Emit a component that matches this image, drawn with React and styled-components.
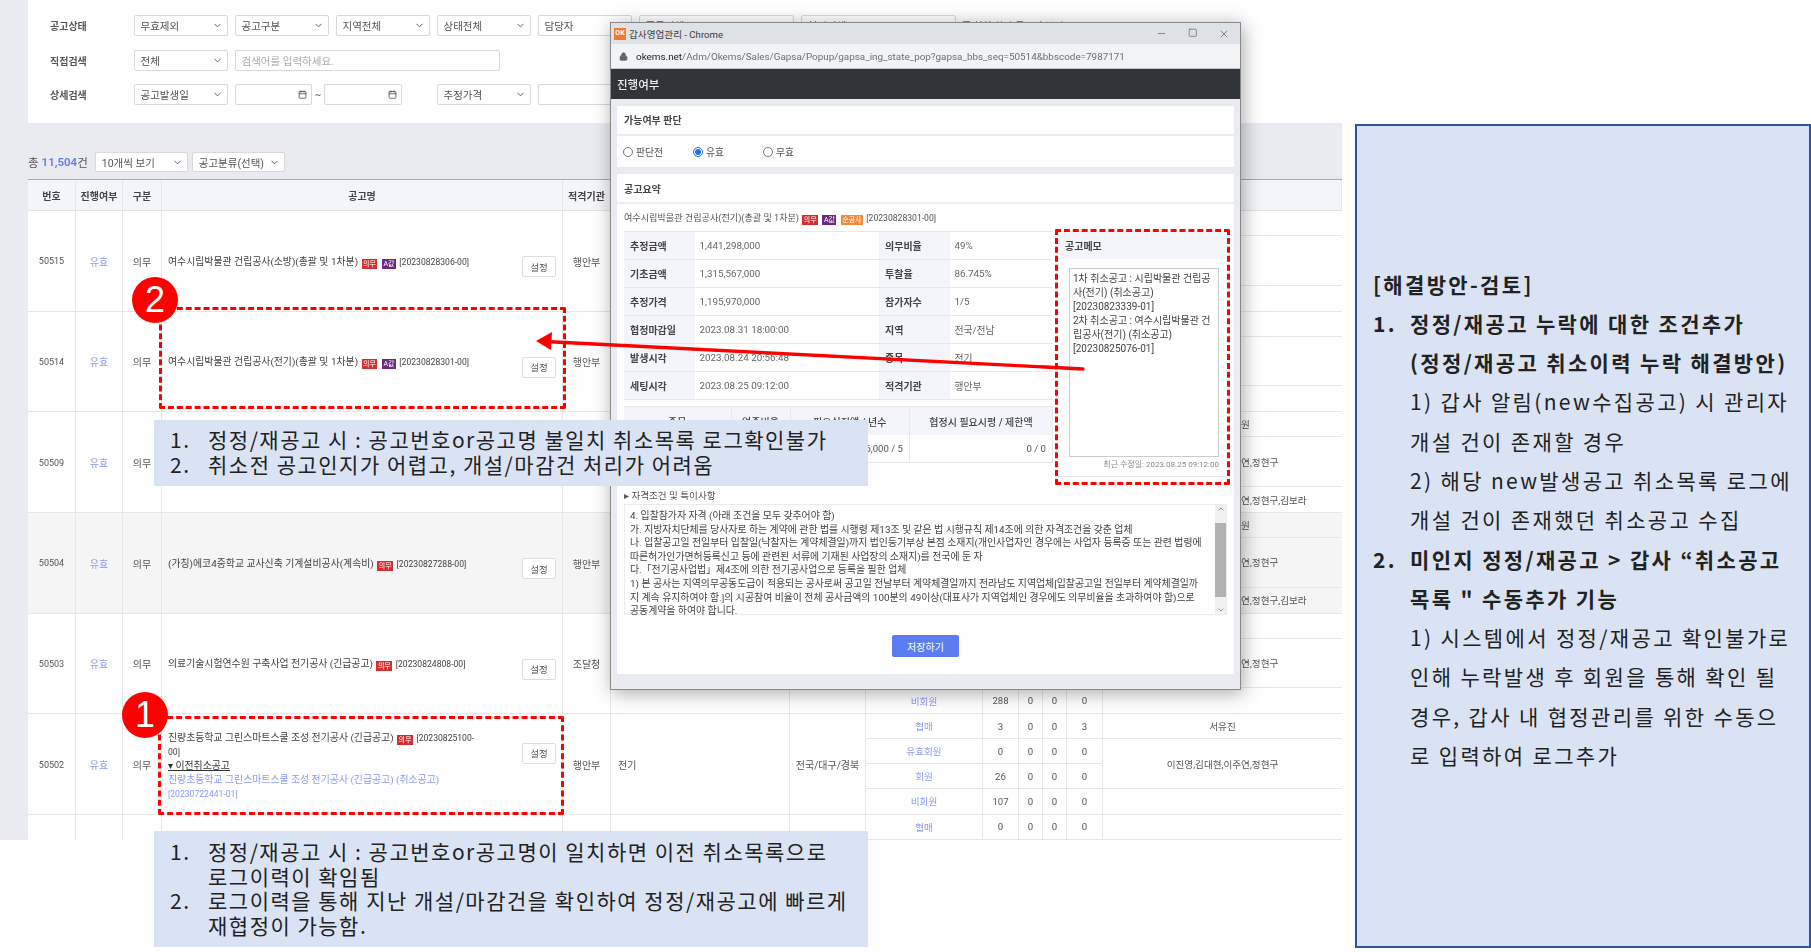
import React from 'react'
import styled, { createGlobalStyle } from 'styled-components'
import { ChevronDown, Lock, Minus, Square, X, Calendar, ChevronUp } from 'lucide-react'

const GlobalStyle = createGlobalStyle`
    html, body {
        margin: 0;
        padding: 0;
        background: #fff;
    }
    * {
        box-sizing: border-box;
    }
`

const FONT = `Roboto, "Noto Sans CJK KR", sans-serif`

const Page = styled.div`
    position: relative;
    display: grid;
    grid-template-columns: 1342px 1fr;
    width: 1811px;
    height: 952px;
    overflow: hidden;
    font-family: ${FONT};
    color: #444;
`

/* ---------- the screenshot behind everything ---------- */
const Base = styled.div`
    height: 840px;
    overflow: hidden;
    padding-left: 28px;
    background: #e9ebf0;
    filter: blur(0.35px);
`

const FilterCard = styled.div`
    display: flex;
    flex-direction: column;
    gap: 13.5px;
    height: 123px;
    padding: 15px 0 0 22px;
    background: #fff;
`

const FilterRow = styled.div`
    display: flex;
    align-items: center;
    gap: 7px;
    height: 21px;
`

const FilterLabel = styled.span`
    width: 76.5px;
    font-size: 10px;
    font-weight: 600;
    color: #555;
`

const SelectBox = styled.div`
    display: flex;
    align-items: center;
    justify-content: space-between;
    flex: none;
    width: ${({ $w }) => $w || 94}px;
    height: ${({ $h }) => $h || 21}px;
    padding: 0 4px 0 6px;
    border: 1px solid #d9d9d9;
    border-radius: 2px;
    background: #fff;
    font-size: 10.5px;
    color: #555;
    white-space: nowrap;
`

const InputBox = styled(SelectBox)`
    color: #aaa;
`

const Tilde = styled.span`
    width: 5px;
    margin: 0 -3.5px;
    font-size: 9px;
`

const Spacer = styled.span`
    width: ${({ $w }) => $w}px;
    flex: none;
`

const CheckMark = styled.span`
    flex: none;
    width: 9px;
    height: 9px;
    margin-left: -1px;
    border: 1px solid #888;
    border-radius: 2px;
`

const CheckLabel = styled.span`
    margin-left: -4px;
    font-size: 10px;
    color: #666;
    white-space: nowrap;
`

const CountRow = styled.div`
    display: flex;
    align-items: center;
    height: 56px;
    padding-top: 22px;
    font-size: 11.5px;
    color: #555;
`

const CountNum = styled.b`
    margin: 0 0 0 3px;
    color: #5f7df0;
    font-weight: 600;
`

const CountSelects = styled.div`
    display: flex;
    gap: 4px;
    margin-left: 7px;
`

const Table = styled.div`
    width: 1314px;
    border-top: 1px solid #aaa;
    background: #fff;
`

const COLS = '48px 47px 39px 401px 48px 179px 76px 1fr'

const HeadRow = styled.div`
    display: grid;
    grid-template-columns: ${COLS};
    height: 31px;
    background: #f3f5fa;
    border-bottom: 1px solid #e4e4e4;
`

const HeadCell = styled.div`
    display: flex;
    align-items: center;
    justify-content: center;
    border-right: 1px solid #e6e6e6;
    font-size: 10px;
    font-weight: 600;
    color: #444;
    white-space: nowrap;
`

const Row = styled.div`
    display: grid;
    grid-template-columns: ${COLS};
    height: 100.67px;
    background: ${({ $shade }) => ($shade ? '#f5f5f5' : '#fff')};
    border-bottom: 1px solid #e6e6e6;
`

const Cell = styled.div`
    display: flex;
    align-items: center;
    justify-content: ${({ $left }) => ($left ? 'flex-start' : 'center')};
    padding-top: 1px;
    padding-left: ${({ $left }) => ($left ? '7px' : '0')};
    border-right: 1px solid #e6e6e6;
    font-size: ${({ $num }) => ($num ? '9px' : '10px')};
    color: ${({ $link }) => ($link ? '#8a9bf5' : '#555')};
    white-space: nowrap;
`

const NameCell = styled(Cell)`
    justify-content: space-between;
    padding: 0 6px 0 6px;
    white-space: normal;
`

const NameText = styled.div`
    width: 312px;
    margin-top: ${({ $multi }) => ($multi ? '4px' : '2px')};
    line-height: 14px;
    font-size: 9.9px;
    color: #444;
`

const Code = styled.span`
    font-size: 8.6px;
`

const Badge = styled.span`
    display: inline-block;
    margin: 0 1px;
    padding: 0 1.5px;
    height: 10px;
    line-height: 10px;
    vertical-align: -1px;
    font-size: 7px;
    color: #fff;
    background: ${({ $c }) => $c};
`

const PrevToggle = styled.div`
    text-decoration: underline;
    color: #333;
`

const PrevLink = styled.div`
    color: #8a9bf5;
`

const SetButton = styled.div`
    display: flex;
    align-items: center;
    justify-content: center;
    flex: none;
    width: 34px;
    height: 21px;
    margin-top: ${({ $up }) => ($up ? '0' : '12px')};
    margin-bottom: ${({ $up }) => ($up ? '22px' : '0')};
    border: 1px solid #ddd;
    border-radius: 2px;
    background: #fff;
    font-size: 9.5px;
    color: #555;
`

const SubGrid = styled.div`
    display: grid;
    grid-template-columns: 117px 36px 24px 24px 36px 1fr;
    grid-template-rows: repeat(4, 1fr);
    min-height: 0;
`

const SubCell = styled.div`
    display: flex;
    align-items: center;
    justify-content: center;
    border-right: 1px solid #e6e6e6;
    border-bottom: ${({ $last }) => ($last ? 'none' : '1px solid #e6e6e6')};
    font-size: 9.6px;
    color: ${({ $link }) => ($link ? '#8a9bf5' : '#555')};
    white-space: nowrap;
`

const ManagerCell = styled(SubCell)`
    grid-column: 6;
    grid-row: ${({ $span }) => ($span ? 'span 2' : 'auto')};
    border-right: none;
`

/* ---------- popup window ---------- */
const Popup = styled.div`
    position: absolute;
    left: 610px;
    top: 22px;
    width: 631px;
    height: 668px;
    display: flex;
    flex-direction: column;
    background: #e9ebf0;
    border: 1px solid #8a8a8a;
    box-shadow: 2px 3px 18px rgba(0, 0, 0, 0.35);
    filter: blur(0.3px);
`

const TitleBar = styled.div`
    display: flex;
    align-items: center;
    height: 21px;
    padding: 0 10px 0 3px;
    background: #dee1e6;
    font-size: 9.6px;
    color: #3c4043;
`

const AppIcon = styled.span`
    display: flex;
    align-items: center;
    justify-content: center;
    width: 12px;
    height: 12px;
    margin-right: 3px;
    background: #ee7c2b;
    color: #fff;
    font-size: 7px;
    font-weight: 700;
    line-height: 1;
`

const WinControls = styled.div`
    display: flex;
    gap: 21px;
    margin-left: auto;
    color: #444;
`

const UrlBar = styled.div`
    display: flex;
    align-items: center;
    gap: 8px;
    height: 25px;
    padding: 0 8px;
    background: #f1f3f4;
    border-bottom: 1px solid #c4c6c9;
    font-size: 9.9px;
    color: #6b6f74;
    white-space: nowrap;
`

const UrlHost = styled.span`
    color: #222;
`

const DarkBar = styled.div`
    display: flex;
    align-items: center;
    height: 30px;
    padding-left: 6px;
    background: #313539;
    font-size: 11.5px;
    font-weight: 500;
    color: #eee;
`

const PopupBody = styled.div`
    display: flex;
    flex-direction: column;
    gap: 7.5px;
    padding: 6.5px 6px 0;
`

const Section = styled.div`
    display: flex;
    flex-direction: column;
    background: #fff;
    height: ${({ $h }) => $h}px;
`

const SectionTitle = styled.div`
    display: flex;
    align-items: center;
    flex: none;
    height: 30px;
    padding-left: 7px;
    border-bottom: 2px solid #eceef2;
    font-size: 10px;
    font-weight: 600;
    color: #444;
`

const RadioRow = styled.div`
    display: flex;
    align-items: center;
    flex: 1;
    padding: 1px 0 0 6px;
`

const RadioLabel = styled.label`
    display: flex;
    align-items: center;
    gap: 3px;
    width: 70px;
    font-size: 9.8px;
    color: #555;
`

const Radio = styled.input`
    width: 10px;
    height: 10px;
    margin: 0;
    accent-color: #1a73e8;
`

const SummaryBody = styled.div`
    display: flex;
    flex-direction: column;
    padding: 0 7px;
    flex: 1;
`

const NoticeLine = styled.div`
    height: 27px;
    line-height: 29px;
    font-size: 9.1px;
    color: #555;
    white-space: nowrap;
`

const SummaryGrid = styled.div`
    display: grid;
    grid-template-columns: 429px 1fr;
    column-gap: 5px;
`

const LeftCol = styled.div`
    display: flex;
    flex-direction: column;
    gap: 6px;
`

const InfoGrid = styled.div`
    display: grid;
    grid-template-columns: 70.5px 184.5px 70.5px 1fr;
    grid-auto-rows: 28px;
    border-top: 1px solid #e8e8e8;
`

const InfoTh = styled.div`
    display: flex;
    align-items: center;
    padding-left: 6px;
    background: #f3f5fa;
    border-bottom: 1px solid #e8e8e8;
    font-size: 10px;
    font-weight: 600;
    color: #444;
`

const InfoTd = styled.div`
    display: flex;
    align-items: center;
    padding-left: 5px;
    border-bottom: 1px solid #e8e8e8;
    font-size: 9.8px;
    color: #666;
`

const ReqGrid = styled.div`
    display: grid;
    grid-template-columns: 107.5px 59px 119.5px 1fr;
    grid-template-rows: 28px 28px;
    border-top: 1px solid #e8e8e8;
`

const ReqHead = styled.div`
    display: flex;
    align-items: center;
    justify-content: center;
    background: #f3f5fa;
    border-right: 1px solid #e8e8e8;
    font-size: 10px;
    font-weight: 500;
    color: #444;
`

const ReqCell = styled.div`
    display: flex;
    align-items: center;
    justify-content: ${({ $right }) => ($right ? 'flex-end' : 'center')};
    padding-right: ${({ $right }) => ($right ? '6px' : '0')};
    border-right: 1px solid #e8e8e8;
    border-bottom: 1px solid #e8e8e8;
    font-size: 9.6px;
    color: #555;
`

const MemoCard = styled.div`
    display: flex;
    flex-direction: column;
    height: 246px;
    border-bottom: 1px solid #e8e8e8;
`

const MemoHead = styled.div`
    display: flex;
    align-items: center;
    flex: none;
    height: 28px;
    padding-left: 7px;
    background: #f3f5fa;
    font-size: 10px;
    font-weight: 600;
    color: #444;
`

const MemoText = styled.div`
    height: 189px;
    margin: 9px 8px 0 11px;
    padding: 3px 2px 3px 3px;
    border: 1px solid #ccc;
    font-size: 10px;
    line-height: 14px;
    color: #444;
    white-space: nowrap;
`

const MemoStamp = styled.div`
    margin: 1px 8px 0 0;
    text-align: right;
    font-size: 8px;
    color: #8a8a8a;
`

const DetailTitle = styled.div`
    margin-top: 10px;
    height: 17px;
    line-height: 17px;
    font-size: 9.6px;
    color: #555;
`

const DetailBox = styled.div`
    display: flex;
    height: 111px;
    border: 1px solid #ececec;
`

const DetailText = styled.div`
    flex: 1;
    padding: 4px 0 0 5px;
`

const DetailLine = styled.div`
    height: 13.6px;
    line-height: 13.6px;
    font-size: 9.9px;
    color: #444;
    white-space: nowrap;
`

const ScrollTrack = styled.div`
    display: flex;
    flex-direction: column;
    align-items: center;
    justify-content: space-between;
    width: 11px;
    background: #f1f1f1;
    color: #666;
`

const ScrollThumb = styled.div`
    width: 100%;
    height: 74px;
    background: #b2b2b2;
`

const SaveRow = styled.div`
    display: flex;
    justify-content: center;
    margin-top: 20px;
`

const SaveButton = styled.div`
    display: flex;
    align-items: center;
    justify-content: center;
    width: 67px;
    height: 22px;
    border-radius: 2px;
    background: #5b7df0;
    font-size: 10px;
    color: #fff;
`

/* ---------- slide annotations over the screenshot ---------- */
const DashedBox = styled.div`
    position: absolute;
    left: ${({ $x }) => $x}px;
    top: ${({ $y }) => $y}px;
    width: ${({ $w }) => $w}px;
    height: ${({ $h }) => $h}px;
    border: 3px dashed #f00;
    border-radius: 2px;
`

const NumberDot = styled.div`
    position: absolute;
    left: ${({ $x }) => $x}px;
    top: ${({ $y }) => $y}px;
    display: flex;
    align-items: center;
    justify-content: center;
    width: 46px;
    height: 46px;
    border-radius: 50%;
    background: #f00;
    color: #fff;
    font-family: "Liberation Sans", sans-serif;
    font-size: 36px;
    line-height: 1;
`

const Arrow = styled.svg`
    position: absolute;
    left: 530px;
    top: 330px;
`

const Callout = styled.div`
    position: absolute;
    left: 154px;
    top: ${({ $y }) => $y}px;
    width: 714px;
    height: ${({ $h }) => $h}px;
    padding: ${({ $pad }) => $pad}px 0 0 16px;
    background: #dae3f3;
    font-family: "Noto Sans CJK KR", sans-serif;
    font-size: 21px;
    letter-spacing: 1.5px;
    line-height: 24.6px;
    color: #222;
`

const CalloutItem = styled.div`
    display: grid;
    grid-template-columns: 38px 1fr;
    white-space: nowrap;
`

const SidePanel = styled.aside`
    height: 824px;
    margin: 123.5px 0 0 13px;
    padding: 139px 0 0 16px;
    background: #dae3f3;
    border: 2px solid #2f5597;
    font-family: "Noto Sans CJK KR", sans-serif;
    font-size: 21px;
    letter-spacing: 2.35px;
    line-height: 39.3px;
    color: #222;
    white-space: nowrap;
`

const PanelItem = styled.div`
    display: grid;
    grid-template-columns: 37px 1fr;
    font-weight: ${({ $bold }) => ($bold ? 700 : 400)};
`

const PanelTitle = styled.div`
    font-weight: 700;
`

const PanelNote = styled.div`
    padding-left: 37px;
`

const ICON_CHEVRON = <ChevronDown size={11} strokeWidth={2} color="#555" />

const topSelects = [
    { text: '무효제외' }, { text: '공고구분' }, { text: '지역전체' }, { text: '상태전체' }, { text: '담당자' },
    { text: '종목전체', w: 155 }, { text: '협정전체', w: 155 },
]

const columns = ['번호', '진행여부', '구분', '공고명', '적격기관', '종목', '지역', null]

const names = {
    a: '이진영,김대현,이주연,정현구',
    b: '서유진,이진영,김대현,이주연,정현구,김보라',
}

const rows = [
    { no: '50515', title: '여수시립박물관 건립공사(소방)(총괄 및 1차분)', badges: ['의무', 'A값'], code: '[20230828306-00]', org: '행안부', mgr: ['', '', ''] },
    { no: '50514', title: '여수시립박물관 건립공사(전기)(총괄 및 1차분)', badges: ['의무', 'A값'], code: '[20230828301-00]', org: '행안부', mgr: ['', '', ''] },
    { no: '50509', mgr: ['김수원,박지원', names.a, names.b] },
    { no: '50504', shade: true, title: '(가칭)에코4중학교 교사신축 기계설비공사(계속비)', badges: ['의무'], code: '[20230827288-00]', org: '행안부', mgr: ['김수원,박지원', names.a, names.b] },
    { no: '50503', title: '의료기술시험연수원 구축사업 전기공사 (긴급공고)', badges: ['의무'], code: '[20230824808-00]', org: '조달청', mgr: ['', names.a, ''], last: [288, 0, 0, 0] },
    { no: '50502', multi: true, org: '행안부', kind: '전기', area: '전국/대구/경북', mgr: ['서유진', names.a, ''],
        nums: [[3, 0, 0, 3], [0, 0, 0, 0], [26, 0, 0, 0], [107, 0, 0, 0]] },
    { mgr: ['', '', ''] },
]

const subLabels = ['협매', '유효회원', '회원', '비회원']

const infoRows = [
    ['추정금액', '1,441,298,000', '의무비율', '49%'],
    ['기초금액', '1,315,567,000', '투찰율', '86.745%'],
    ['추정가격', '1,195,970,000', '참가자수', '1/5'],
    ['협정마감일', '2023.08.31 18:00:00', '지역', '전국/전남'],
    ['발생시각', '2023.08.24 20:56:48', '종목', '전기'],
    ['세팅시각', '2023.08.25 09:12:00', '적격기관', '행안부'],
]

const detailLines = [
    '4. 입찰참가자 자격 (아래 조건을 모두 갖추어야 함)',
    '가. 지방자치단체를 당사자로 하는 계약에 관한 법률 시행령 제13조 및 같은 법 시행규칙 제14조에 의한 자격조건을 갖춘 업체',
    '나. 입찰공고일 전일부터 입찰일(낙찰자는 계약체결일)까지 법인등기부상 본점 소재지(개인사업자인 경우에는 사업자 등록증 또는 관련 법령에',
    '따른허가인가면허등록신고 등에 관련된 서류에 기재된 사업장의 소재지)를 전국에 둔 자',
    '다.「전기공사업법」제4조에 의한 전기공사업으로 등록을 필한 업체',
    '1) 본 공사는 지역의무공동도급이 적용되는 공사로써 공고일 전날부터 계약체결일까지 전라남도 지역업체[입찰공고일 전일부터 계약체결일까',
    '지 계속 유지하여야 함.]의 시공참여 비율이 전체 공사금액의 100분의 49이상(대표사가 지역업체인 경우에도 의무비율을 초과하여야 함)으로',
    '공동계약을 하여야 합니다.',
]

const badgeColor = { 의무: '#d32f2f', A값: '#6a2c80', 순공사: '#ee8a3c' }

const NameBadges = ({ list }) => list.map(b => <React.Fragment key={b}><Badge $c={badgeColor[b]}>{b}</Badge>{' '}</React.Fragment>)

const Filters = () => (
    <FilterCard>
        <FilterRow>
            <FilterLabel>공고상태</FilterLabel>
            {topSelects.map(s => <SelectBox key={s.text} $w={s.w}>{s.text}{ICON_CHEVRON}</SelectBox>)}
            <CheckMark />
            <CheckLabel>협약 참가 공고만 보기</CheckLabel>
        </FilterRow>
        <FilterRow>
            <FilterLabel>직접검색</FilterLabel>
            <SelectBox>전체{ICON_CHEVRON}</SelectBox>
            <InputBox $w={265}>검색어를 입력하세요.</InputBox>
        </FilterRow>
        <FilterRow>
            <FilterLabel>상세검색</FilterLabel>
            <SelectBox>공고발생일{ICON_CHEVRON}</SelectBox>
            <InputBox $w={77}><span />
                <Calendar size={9} color="#444" />
            </InputBox>
            <Tilde>~</Tilde>
            <InputBox $w={78}><span />
                <Calendar size={9} color="#444" />
            </InputBox>
            <Spacer $w={21} />
            <SelectBox>추정가격{ICON_CHEVRON}</SelectBox>
            <SelectBox $w={94} />
        </FilterRow>
    </FilterCard>
)

const TableRow = ({ row }) => {
    const nums = row.nums || subLabels.map((_, i) => (i === 3 && row.last) || [0, 0, 0, 0])
    return (
        <Row $shade={row.shade}>
            <Cell $num>{row.no}</Cell>
            <Cell $link>{row.no && '유효'}</Cell>
            <Cell>{row.no && '의무'}</Cell>
            <NameCell>
                {row.title && (
                    <NameText>{row.title} <NameBadges list={row.badges} /><Code>{row.code}</Code></NameText>
                )}
                {row.multi && (
                    <NameText $multi>
                        진량초등학교 그린스마트스쿨 조성 전기공사 (긴급공고) <NameBadges list={['의무']} /><Code>[20230825100-00]</Code>
                        <PrevToggle>▾ 이전취소공고</PrevToggle>
                        <PrevLink>진량초등학교 그린스마트스쿨 조성 전기공사 (긴급공고) (취소공고) <Code>[20230722441-01]</Code></PrevLink>
                    </NameText>
                )}
                {row.no && row.no !== '50509' && <SetButton $up={row.multi}>설정</SetButton>}
            </NameCell>
            <Cell>{row.org}</Cell>
            <Cell $left>{row.kind}</Cell>
            <Cell>{row.area}</Cell>
            <SubGrid>
                {subLabels.map((label, i) => (
                    <React.Fragment key={label}>
                        <SubCell $link $last={i === 3}>{label}</SubCell>
                        {nums[i].map((n, j) => <SubCell key={j} $last={i === 3}>{n}</SubCell>)}
                        {i !== 2 && <ManagerCell $span={i === 1} $last={i === 3}>{row.mgr[i === 3 ? 2 : i]}</ManagerCell>}
                    </React.Fragment>
                ))}
            </SubGrid>
        </Row>
    )
}

const ScreenBase = () => (
    <Base>
        <Filters />
        <CountRow>
            총<CountNum>11,504</CountNum>건
            <CountSelects>
                <SelectBox $w={93} $h={20}>10개씩 보기{ICON_CHEVRON}</SelectBox>
                <SelectBox $w={93} $h={20}>공고분류(선택){ICON_CHEVRON}</SelectBox>
            </CountSelects>
        </CountRow>
        <Table>
            <HeadRow>
                {columns.map((c, i) => <HeadCell key={i}>{c || '담당자부서'}</HeadCell>)}
            </HeadRow>
            {rows.map((r, i) => <TableRow key={i} row={r} />)}
        </Table>
    </Base>
)

const GapsaPopup = () => (
    <Popup>
        <TitleBar>
            <AppIcon>OK</AppIcon>
            갑사영업관리 - Chrome
            <WinControls>
                <Minus size={11} strokeWidth={1.2} />
                <Square size={9.5} strokeWidth={1.4} />
                <X size={12} strokeWidth={1.2} />
            </WinControls>
        </TitleBar>
        <UrlBar>
            <Lock size={9} fill="#5f6368" color="#5f6368" />
            <span><UrlHost>okems.net</UrlHost>/Adm/Okems/Sales/Gapsa/Popup/gapsa_ing_state_pop?gapsa_bbs_seq=50514&bbscode=7987171</span>
        </UrlBar>
        <DarkBar>진행여부</DarkBar>
        <PopupBody>
            <Section $h={61}>
                <SectionTitle>가능여부 판단</SectionTitle>
                <RadioRow>
                    <RadioLabel><Radio type="radio" name="judge" readOnly />판단전</RadioLabel>
                    <RadioLabel><Radio type="radio" name="judge" defaultChecked />유효</RadioLabel>
                    <RadioLabel><Radio type="radio" name="judge" readOnly />무효</RadioLabel>
                </RadioRow>
            </Section>
            <Section $h={500}>
                <SectionTitle>공고요약</SectionTitle>
                <SummaryBody>
                    <NoticeLine>여수시립박물관 건립공사(전기)(총괄 및 1차분) <NameBadges list={['의무', 'A값', '순공사']} /><Code>[20230828301-00]</Code></NoticeLine>
                    <SummaryGrid>
                        <LeftCol>
                            <InfoGrid>
                                {infoRows.flatMap(r => [
                                    <InfoTh key={r[0]}>{r[0]}</InfoTh>,
                                    <InfoTd key={r[1]}>{r[1]}</InfoTd>,
                                    <InfoTh key={r[2]}>{r[2]}</InfoTh>,
                                    <InfoTd key={r[3]}>{r[3]}</InfoTd>,
                                ])}
                            </InfoGrid>
                            <ReqGrid>
                                <ReqHead>종목</ReqHead>
                                <ReqHead>업종비율</ReqHead>
                                <ReqHead>필요실적액 / 년수</ReqHead>
                                <ReqHead>협정시 필요시평 / 제한액</ReqHead>
                                <ReqCell>전기</ReqCell>
                                <ReqCell>100%</ReqCell>
                                <ReqCell $right>1,196,000 / 5</ReqCell>
                                <ReqCell $right>0 / 0</ReqCell>
                            </ReqGrid>
                        </LeftCol>
                        <MemoCard>
                            <MemoHead>공고메모</MemoHead>
                            <MemoText>
                                1차 취소공고 : 시립박물관 건립공<br />
                                사(전기) (취소공고)<br />
                                [20230823339-01]<br />
                                2차 취소공고 : 여수시립박물관 건<br />
                                립공사(전기) (취소공고)<br />
                                [20230825076-01]
                            </MemoText>
                            <MemoStamp>최근 수정일: 2023.08.25 09:12:00</MemoStamp>
                        </MemoCard>
                    </SummaryGrid>
                    <DetailTitle>▸ 자격조건 및 특이사항</DetailTitle>
                    <DetailBox>
                        <DetailText>
                            {detailLines.map(l => <DetailLine key={l}>{l}</DetailLine>)}
                        </DetailText>
                        <ScrollTrack>
                            <ChevronUp size={8} />
                            <ScrollThumb />
                            <ChevronDown size={8} />
                        </ScrollTrack>
                    </DetailBox>
                    <SaveRow><SaveButton>저장하기</SaveButton></SaveRow>
                </SummaryBody>
            </Section>
        </PopupBody>
    </Popup>
)

const App = () => (
    <Page>
        <GlobalStyle />
        <ScreenBase />
        <SidePanel>
            <PanelTitle>[해결방안-검토]</PanelTitle>
            <PanelItem $bold>
                <span>1.</span>
                <span>정정/재공고 누락에 대한 조건추가<br />(정정/재공고 취소이력 누락 해결방안)</span>
            </PanelItem>
            <PanelNote>
                1) 갑사 알림(new수집공고) 시 관리자<br />
                개설 건이 존재할 경우<br />
                2) 해당 new발생공고 취소목록 로그에<br />
                개설 건이 존재했던 취소공고 수집
            </PanelNote>
            <PanelItem $bold>
                <span>2.</span>
                <span>미인지 정정/재공고 &gt; 갑사 “취소공고<br />목록 " 수동추가 기능</span>
            </PanelItem>
            <PanelNote>
                1) 시스템에서 정정/재공고 확인불가로<br />
                인해 누락발생 후 회원을 통해 확인 될<br />
                경우, 갑사 내 협정관리를 위한 수동으<br />
                로 입력하여 로그추가
            </PanelNote>
        </SidePanel>

        <GapsaPopup />

        <DashedBox $x={159} $y={307} $w={407} $h={102} />
        <DashedBox $x={158} $y={716} $w={406} $h={99} />
        <DashedBox $x={1055} $y={229} $w={175} $h={256} />

        <Arrow width="560" height="45" viewBox="0 0 560 45">
            <path d="M553 39 L20 11.8" stroke="#f00" strokeWidth="3.4" strokeLinecap="round" fill="none" />
            <path d="M6 11 L22 2 L21 20 Z" fill="#f00" />
        </Arrow>

        <NumberDot $x={132} $y={277}>2</NumberDot>
        <NumberDot $x={122} $y={692}>1</NumberDot>

        <Callout $y={420} $h={66} $pad={7}>
            <CalloutItem><span>1.</span><span>정정/재공고 시 : 공고번호or공고명 불일치 취소목록 로그확인불가</span></CalloutItem>
            <CalloutItem><span>2.</span><span>취소전 공고인지가 어렵고, 개설/마감건 처리가 어려움</span></CalloutItem>
        </Callout>
        <Callout $y={831} $h={116} $pad={8}>
            <CalloutItem><span>1.</span><span>정정/재공고 시 : 공고번호or공고명이 일치하면 이전 취소목록으로<br />로그이력이 확임됨</span></CalloutItem>
            <CalloutItem><span>2.</span><span>로그이력을 통해 지난 개설/마감건을 확인하여 정정/재공고에 빠르게<br />재협정이 가능함.</span></CalloutItem>
        </Callout>
    </Page>
)

export default App
